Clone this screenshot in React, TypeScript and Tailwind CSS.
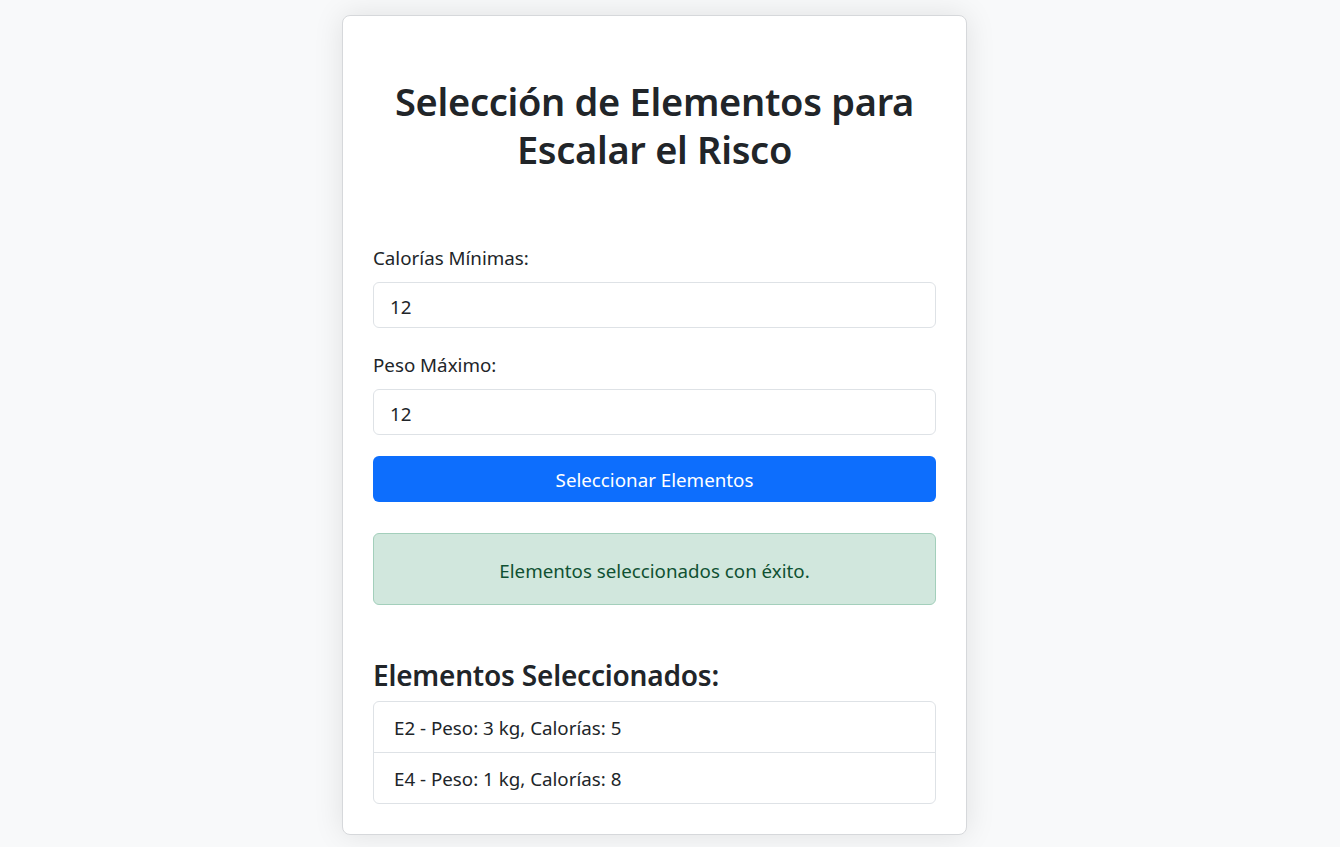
import { useState } from "react";

const items = [
  { id: "E2", peso: 3, calorias: 5 },
  { id: "E4", peso: 1, calorias: 8 },
];

export default function App() {
  const [minCal, setMinCal] = useState("12");
  const [maxPeso, setMaxPeso] = useState("12");

  return (
    <div
      className="min-h-[847px] bg-[#f8f9fa] pt-[15px] text-[#212529]"
      style={{ fontFamily: '"Noto Sans", "Open Sans", sans-serif' }}
    >
      <div className="ml-[342px] w-[625px] rounded-lg border border-[#d6d8db] bg-white px-[30px] pb-[30px] pt-[61px] shadow-[0_0_30px_rgba(0,0,0,0.1)]">
        <h1 className="text-center text-[38px] font-semibold leading-[48px] tracking-[-0.3px]">
          Selección de Elementos para Escalar el Risco
        </h1>

        <div className="mt-[73px]">
          <label className="block text-[18.75px] leading-6">Calorías Mínimas:</label>
          <input
            value={minCal}
            onChange={(e) => setMinCal(e.target.value)}
            className="mt-3 block h-[46px] w-full rounded-md border border-[#dee2e6] px-4 pt-[2px] text-[18.75px] outline-none"
          />
          <label className="mt-[25px] block text-[18.75px] leading-6">Peso Máximo:</label>
          <input
            value={maxPeso}
            onChange={(e) => setMaxPeso(e.target.value)}
            className="mt-3 block h-[46px] w-full rounded-md border border-[#dee2e6] px-4 pt-[2px] text-[18.75px] outline-none"
          />
          <button
            type="button"
            className="mt-[21px] block h-[46px] w-full rounded-md bg-[#0d6efd] pt-[3px] text-[18.75px] text-white"
          >
            Seleccionar Elementos
          </button>
        </div>

        <div className="mt-[31px] flex h-[72px] items-center justify-center rounded-md border border-[#a3cfbb] bg-[#d1e7dd] pt-[5px] text-[18.75px] text-[#0f5132]">
          Elementos seleccionados con éxito.
        </div>

        <h3 className="mt-[53px] text-[28px] font-semibold leading-[34px] tracking-[-0.2px]">
          Elementos Seleccionados:
        </h3>
        <ul className="mt-[9px] rounded-md border border-[#dee2e6]">
          {items.map((it, i) => (
            <li
              key={it.id}
              className={
                "px-5 pb-[12px] pt-[14px] text-[18.75px] leading-6" +
                (i > 0 ? " border-t border-[#dee2e6]" : "")
              }
            >
              {it.id} - Peso: {it.peso} kg, Calorías: {it.calorias}
            </li>
          ))}
        </ul>
      </div>
    </div>
  );
}
